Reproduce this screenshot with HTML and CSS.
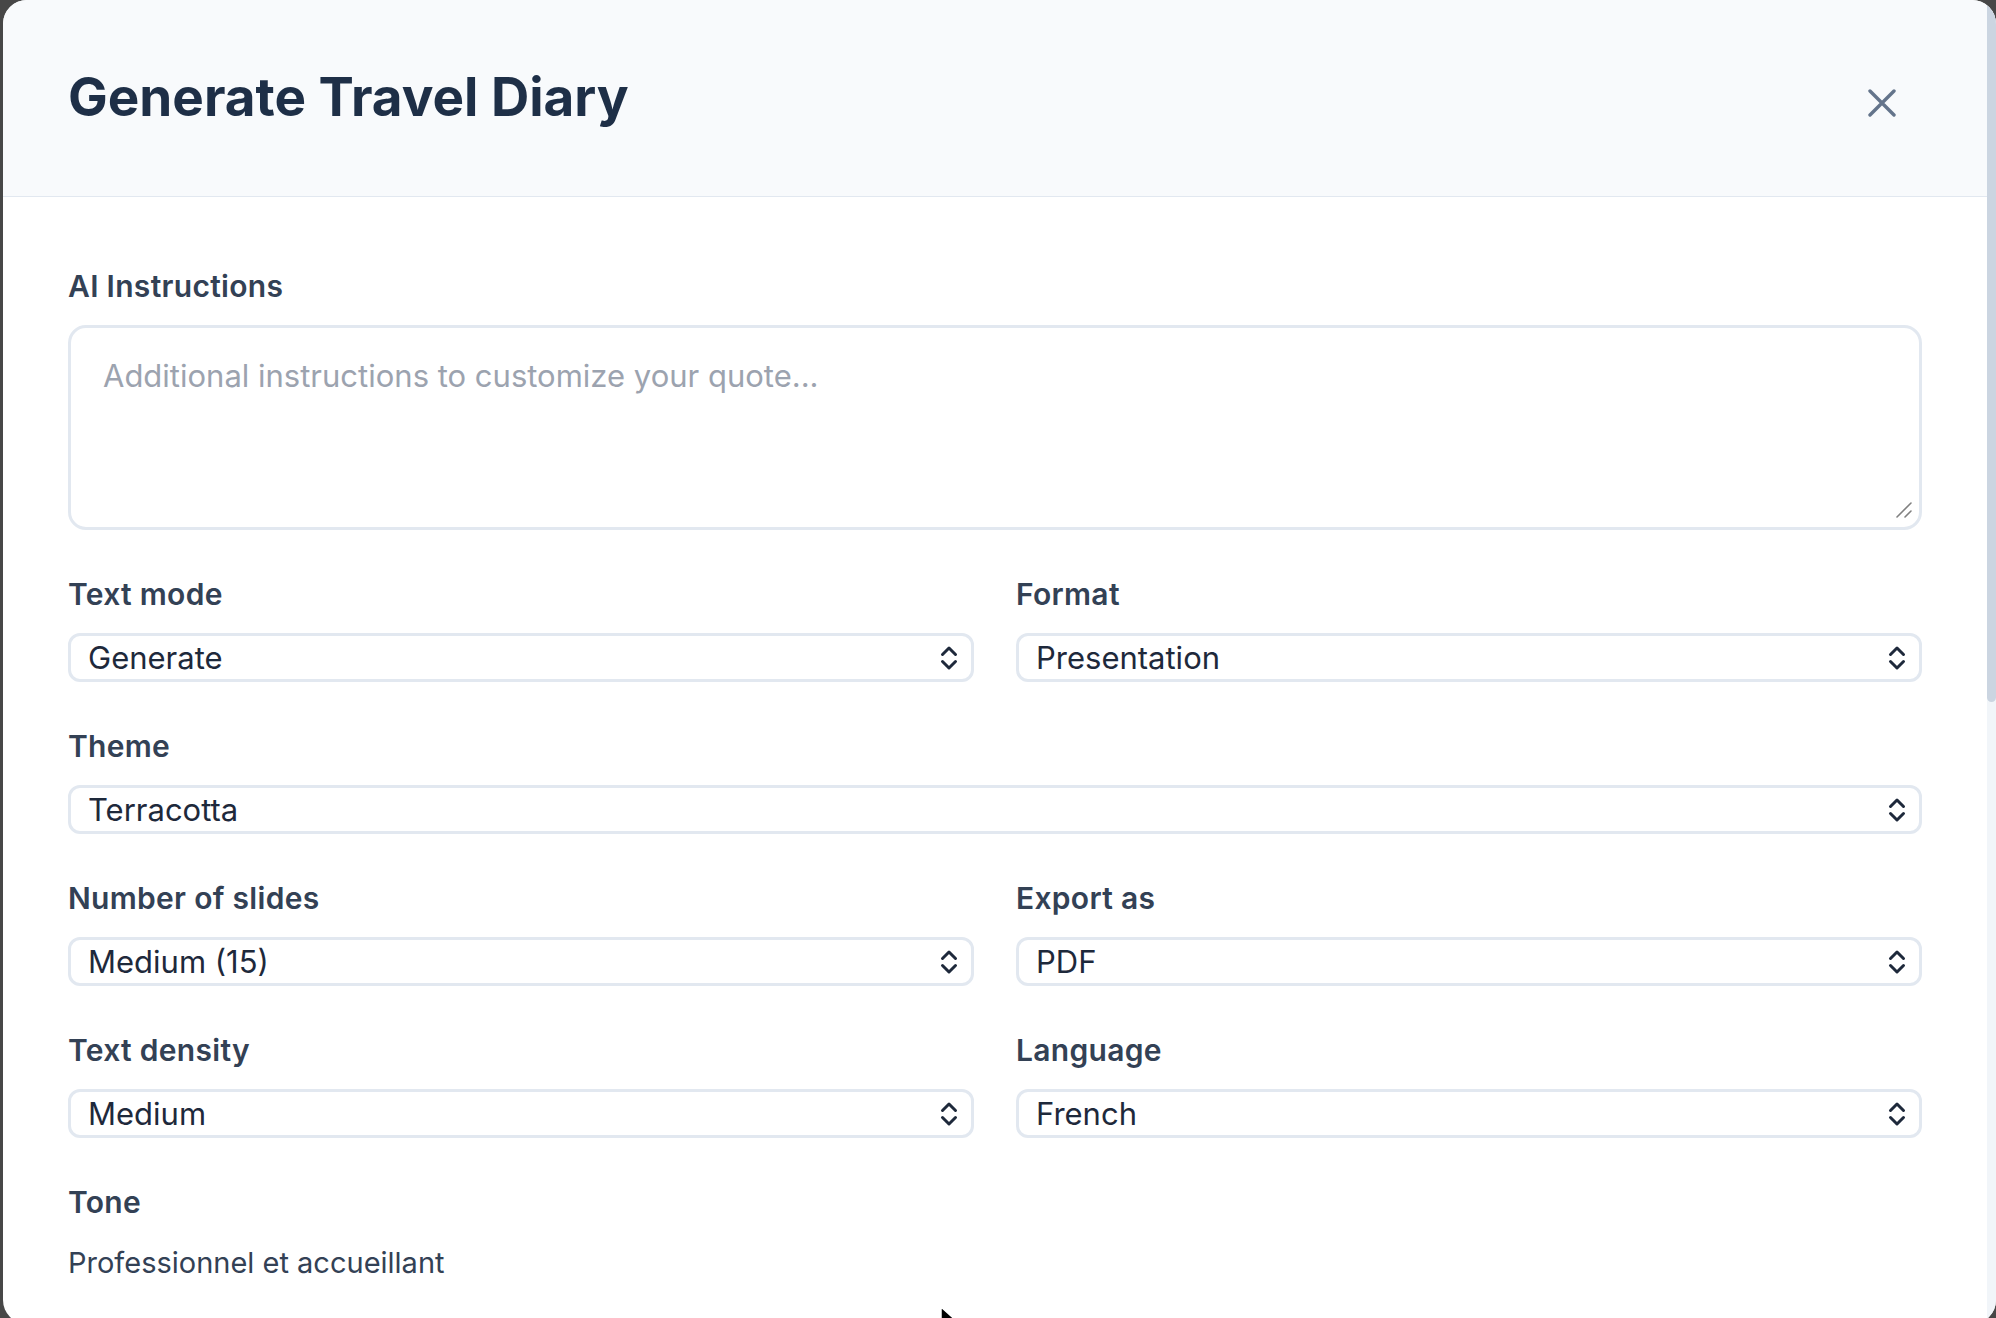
FILE: index.html
```html
<!DOCTYPE html>
<html lang="en">
<head>
    <meta charset="UTF-8">
    <meta name="viewport" content="width=device-width, initial-scale=1.0">
    <title>Generate Travel Diary</title>
    <link rel="stylesheet" href="styles.css">
</head>
<body>
    <div class="modal">
        <div class="modal-main">
            <div class="modal-header">
                <h1>Generate Travel Diary</h1>
                <button class="close-btn" type="button" aria-label="Close">
                    <svg width="28" height="28" viewBox="0 0 28 28" fill="none" stroke="currentColor" stroke-width="3.4" stroke-linecap="round">
                        <path d="M2 2L26 26M26 2L2 26"/>
                    </svg>
                </button>
            </div>

            <form class="modal-body">
                <div class="field full">
                    <label for="instructions">AI Instructions</label>
                    <div class="textarea-wrap">
                        <textarea id="instructions" placeholder="Additional instructions to customize your quote..."></textarea>
                        <svg class="grip" width="18" height="18" viewBox="0 0 18 18" fill="none" stroke="#808080" stroke-width="1.6" stroke-linecap="round">
                            <path d="M2 16L16 2M10 16L16 10"/>
                        </svg>
                    </div>
                </div>

                <div class="field">
                    <label for="text-mode">Text mode</label>
                    <div class="select">
                        <select id="text-mode">
                            <option selected>Generate</option>
                            <option>Condense</option>
                            <option>Preserve</option>
                        </select>
                        <svg class="chevrons" width="18" height="28" viewBox="0 0 18 28" fill="none" stroke="currentColor" stroke-width="3" stroke-linecap="round" stroke-linejoin="round"><path d="M2.5 10.5L9 4L15.5 10.5M2.5 17.5L9 24L15.5 17.5"/></svg>
                    </div>
                </div>

                <div class="field">
                    <label for="format">Format</label>
                    <div class="select">
                        <select id="format">
                            <option selected>Presentation</option>
                            <option>Document</option>
                            <option>Webpage</option>
                        </select>
                        <svg class="chevrons" width="18" height="28" viewBox="0 0 18 28" fill="none" stroke="currentColor" stroke-width="3" stroke-linecap="round" stroke-linejoin="round"><path d="M2.5 10.5L9 4L15.5 10.5M2.5 17.5L9 24L15.5 17.5"/></svg>
                    </div>
                </div>

                <div class="field full">
                    <label for="theme">Theme</label>
                    <div class="select">
                        <select id="theme">
                            <option selected>Terracotta</option>
                            <option>Ocean</option>
                            <option>Forest</option>
                        </select>
                        <svg class="chevrons" width="18" height="28" viewBox="0 0 18 28" fill="none" stroke="currentColor" stroke-width="3" stroke-linecap="round" stroke-linejoin="round"><path d="M2.5 10.5L9 4L15.5 10.5M2.5 17.5L9 24L15.5 17.5"/></svg>
                    </div>
                </div>

                <div class="field">
                    <label for="slides">Number of slides</label>
                    <div class="select">
                        <select id="slides">
                            <option>Short (8)</option>
                            <option selected>Medium (15)</option>
                            <option>Long (25)</option>
                        </select>
                        <svg class="chevrons" width="18" height="28" viewBox="0 0 18 28" fill="none" stroke="currentColor" stroke-width="3" stroke-linecap="round" stroke-linejoin="round"><path d="M2.5 10.5L9 4L15.5 10.5M2.5 17.5L9 24L15.5 17.5"/></svg>
                    </div>
                </div>

                <div class="field">
                    <label for="export">Export as</label>
                    <div class="select">
                        <select id="export">
                            <option selected>PDF</option>
                            <option>PPTX</option>
                        </select>
                        <svg class="chevrons" width="18" height="28" viewBox="0 0 18 28" fill="none" stroke="currentColor" stroke-width="3" stroke-linecap="round" stroke-linejoin="round"><path d="M2.5 10.5L9 4L15.5 10.5M2.5 17.5L9 24L15.5 17.5"/></svg>
                    </div>
                </div>

                <div class="field">
                    <label for="density">Text density</label>
                    <div class="select">
                        <select id="density">
                            <option>Low</option>
                            <option selected>Medium</option>
                            <option>High</option>
                        </select>
                        <svg class="chevrons" width="18" height="28" viewBox="0 0 18 28" fill="none" stroke="currentColor" stroke-width="3" stroke-linecap="round" stroke-linejoin="round"><path d="M2.5 10.5L9 4L15.5 10.5M2.5 17.5L9 24L15.5 17.5"/></svg>
                    </div>
                </div>

                <div class="field">
                    <label for="language">Language</label>
                    <div class="select">
                        <select id="language">
                            <option>English</option>
                            <option selected>French</option>
                            <option>Spanish</option>
                        </select>
                        <svg class="chevrons" width="18" height="28" viewBox="0 0 18 28" fill="none" stroke="currentColor" stroke-width="3" stroke-linecap="round" stroke-linejoin="round"><path d="M2.5 10.5L9 4L15.5 10.5M2.5 17.5L9 24L15.5 17.5"/></svg>
                    </div>
                </div>

                <div class="field full">
                    <label>Tone</label>
                    <p class="value">Professionnel et accueillant</p>
                </div>
            </form>
        </div>

        <!-- scroll track for the modal content -->
        <div class="scrollbar">
            <div class="scrollbar-thumb"></div>
        </div>
    </div>

    <!-- mouse pointer -->
    <svg class="pointer" width="22" height="30" viewBox="0 0 22 30">
        <path d="M1 1L1 24L7 18L11 28L15 26L11 17L19 17Z" fill="#000" stroke="#fff" stroke-width="1.5" stroke-linejoin="round"/>
    </svg>
</body>
</html>
```

FILE: styles.css
```css
html, body {
    margin: 0;
    height: 100%;
}
body {
    background: #474747;
    font-family: Inter, "Noto Sans", sans-serif;
    overflow: hidden;
    position: relative;
}
.modal {
    display: flex;
    margin-left: 3px;
    height: 1324px;
    background: #fff;
    border-radius: 24px;
    overflow: hidden;
}
.modal-main {
    flex: 1;
    min-width: 0;
}
.scrollbar {
    width: 9px;
    flex-shrink: 0;
    background: #f1f5f9;
}
.scrollbar-thumb {
    height: 702px;
    background: #cbd5e1;
    border-radius: 0 0 5px 5px;
}
.modal-header {
    display: flex;
    align-items: center;
    justify-content: space-between;
    height: 196px;
    padding: 0 81px 0 65px;
    background: #f8fafc;
    border-bottom: 1px solid #e2e8f0;
}
.modal-header h1 {
    margin: 0;
    font-size: 53px;
    font-weight: 700;
    line-height: 1.2;
    color: #1e2f47;
}
.close-btn {
    display: flex;
    padding: 10px 10px 6px;
    margin-top: 6px;
    border: none;
    background: none;
    color: #64748b;
    cursor: pointer;
}
.modal-body {
    display: grid;
    grid-template-columns: 1fr 1fr;
    column-gap: 42px;
    row-gap: 46px;
    padding: 71px 65px 0;
}
.field {
    display: flex;
    flex-direction: column;
    min-width: 0;
}
.field.full {
    grid-column: 1 / -1;
}
.field label {
    font-size: 30px;
    font-weight: 600;
    line-height: 36px;
    letter-spacing: 0.01em;
    color: #334155;
    margin-bottom: 21px;
}
.textarea-wrap {
    position: relative;
    display: flex;
}
textarea {
    flex: 1;
    height: 205px;
    box-sizing: border-box;
    padding: 25px 32px;
    border: 3px solid #e2e8f0;
    border-radius: 18px;
    font-family: inherit;
    font-size: 31px;
    line-height: 1.5;
    color: #1e293b;
    resize: none;
    outline: none;
}
textarea::placeholder {
    color: #9ca3af;
}
.grip {
    position: absolute;
    right: 9px;
    bottom: 11px;
    pointer-events: none;
}
.select {
    position: relative;
}
.select select {
    width: 100%;
    height: 49px;
    box-sizing: border-box;
    padding: 0 50px 0 17px;
    border: 3px solid #e2e8f0;
    border-radius: 12px;
    background: #fff;
    font-family: inherit;
    font-size: 31px;
    color: #1e293b;
    appearance: none;
    -webkit-appearance: none;
    outline: none;
}
.chevrons {
    position: absolute;
    right: 16px;
    top: 11px;
    color: #1e293b;
    pointer-events: none;
}
.value {
    margin: 0;
    font-size: 29px;
    line-height: 1.5;
    color: #334155;
}
.pointer {
    position: absolute;
    left: 940px;
    top: 1306px;
}
```
